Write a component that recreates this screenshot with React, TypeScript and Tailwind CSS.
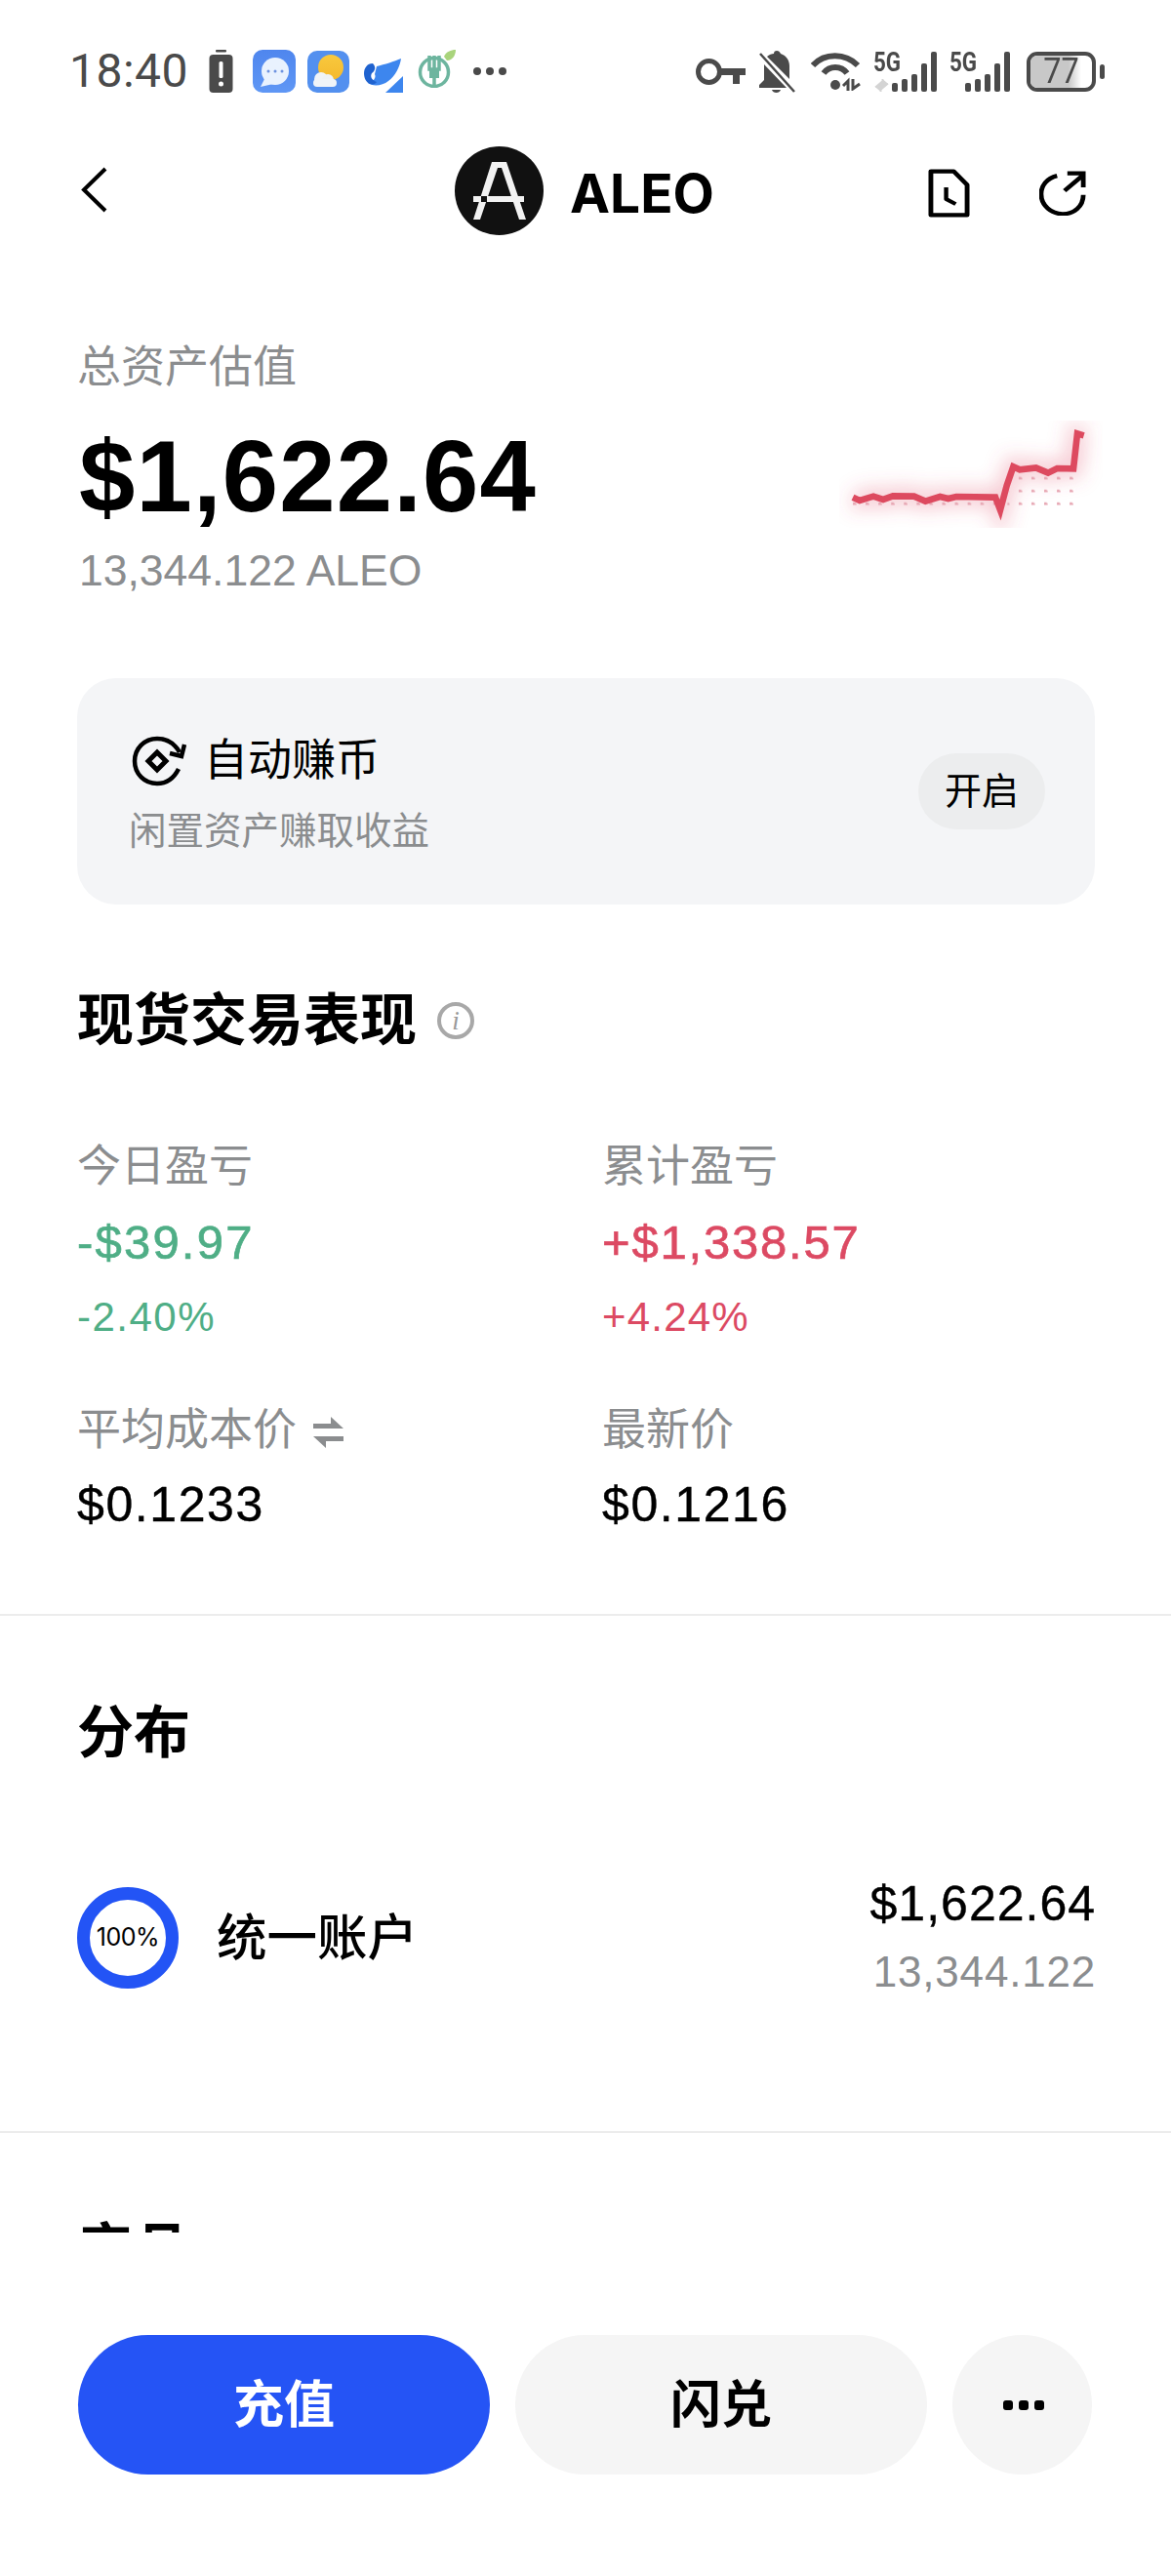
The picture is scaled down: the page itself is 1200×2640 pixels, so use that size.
const FONT = "font-['Liberation_Sans','Noto_Sans_CJK_SC',sans-serif]"

function AppIcons() {
  return (
    <div className="flex items-center h-[44px]">
      {/* 电量警告 */}
      <svg width="25" height="44" viewBox="0 0 25 44" className="ml-[24px]">
        <rect x="7" y="0" width="11" height="2.5" rx="1" fill="#4a4a4a" />
        <rect x="0.5" y="5" width="24" height="39" rx="4" fill="#4a4a4a" />
        <rect x="10.5" y="12" width="4" height="17" rx="1.5" fill="#fff" />
        <circle cx="12.5" cy="35" r="2.5" fill="#fff" />
      </svg>
      {/* 消息 */}
      <svg width="44" height="44" viewBox="0 0 44 44" className="ml-[20px]">
        <defs>
          <linearGradient id="msgBg" x1="0" y1="0" x2="0" y2="1">
            <stop offset="0" stopColor="#4f86ee" />
            <stop offset="1" stopColor="#5f97f5" />
          </linearGradient>
          <linearGradient id="sunBg" x1="0" y1="0" x2="0" y2="1">
            <stop offset="0" stopColor="#f8c93e" />
            <stop offset="1" stopColor="#f5b92e" />
          </linearGradient>
        </defs>
        <rect width="44" height="44" rx="10" fill="url(#msgBg)" />
        <circle cx="23" cy="22" r="14" fill="#e9f2fe" />
        <path d="M12 30 L8 38 L21 35 Z" fill="#e9f2fe" />
        <circle cx="16" cy="22" r="1.5" fill="#6d92e0" />
        <circle cx="23" cy="22" r="1.5" fill="#6d92e0" />
        <circle cx="30" cy="22" r="1.5" fill="#6d92e0" />
      </svg>
      {/* 天气 */}
      <svg width="43" height="43" viewBox="0 0 43 43" className="ml-[12px]">
        <rect width="43" height="43" rx="10" fill="#5390ef" />
        <circle cx="24" cy="17" r="13" fill="url(#sunBg)" />
        <circle cx="14" cy="29" r="7" fill="#f0f4f8" />
        <circle cx="21" cy="30" r="6" fill="#eef2f6" />
        <rect x="6" y="29" width="24" height="8" rx="4" fill="#f0f4f8" />
      </svg>
      {/* 蓝色应用 */}
      <svg width="41" height="35" viewBox="0 0 41 35" className="ml-[14px] self-end">
        <path d="M14 8 C22 6 32 3 39 0 C38 8 33 18 26 23 C20 28 10 29 5 25 C10 24 14 20 12 16 Z" fill="#3d86ee" />
        <path d="M10 5 C4 5 1 10 1 15 C1 20 3 24 7 26 C10 27 13 26 14 24 C9 22 7 19 9 15 C12 13 14 9 10 5 Z" fill="#1f62cf" />
        <path d="M23 35 L41 18 V35 Z" fill="#3d86ee" />
      </svg>
      {/* 绿色应用 */}
      <svg width="40" height="39" viewBox="0 0 40 39" className="ml-[15px] self-start">
        <circle cx="17" cy="23" r="14.5" fill="none" stroke="#6db59f" strokeWidth="3.5" />
        <path d="M12 6 V20 H22 V6 M17 6 V38" fill="none" stroke="#6db59f" strokeWidth="3.5" />
        <rect x="12" y="21" width="10" height="8" fill="#6db59f" />
        <path d="M27 7 C29 2 34 0 39 0 C39 5 36 11 30 11 Z" fill="#a9d47c" />
      </svg>
      {/* 更多 */}
      <div className="ml-[17px] flex gap-[5px]">
        <div className="w-[8px] h-[8px] rounded-full bg-[#4a4a4a]" />
        <div className="w-[8px] h-[8px] rounded-full bg-[#4a4a4a]" />
        <div className="w-[8px] h-[8px] rounded-full bg-[#4a4a4a]" />
      </div>
    </div>
  )
}

function Signal({ arrows, width }: { arrows: boolean; width: string }) {
  return (
    <div className={`relative h-[41px] ${width}`}>
      <span className="absolute left-0 top-[-3px] font-['Roboto',sans-serif] text-[28px] leading-[28px] font-bold text-[#4a4a4a] scale-x-[0.8] origin-left">
        5G
      </span>
      {arrows && (
        <svg width="17" height="13" viewBox="0 0 16 14" className="absolute left-0 bottom-0">
          <path d="M7 14 V4 L1 9 M9 0 V10 L15 5" fill="#d4d4d4" stroke="#d4d4d4" strokeWidth="2" />
        </svg>
      )}
      <div className="absolute right-0 bottom-0 flex items-end gap-[4px]">
        <div className="w-[6px] h-[9px] rounded-[2px] bg-[#4a4a4a]" />
        <div className="w-[6px] h-[13px] rounded-[2px] bg-[#4a4a4a]" />
        <div className="w-[6px] h-[18px] rounded-[2px] bg-[#4a4a4a]" />
        <div className="w-[6px] h-[29px] rounded-[2px] bg-[#4a4a4a]" />
        <div className="w-[6px] h-[41px] rounded-[2px] bg-[#4a4a4a]" />
      </div>
    </div>
  )
}

function SystemIcons() {
  return (
    <div className="flex items-center h-[44px]">
      {/* 钥匙 */}
      <svg width="51" height="27" viewBox="0 0 51 27">
        <circle cx="13.5" cy="13.5" r="11" fill="none" stroke="#4a4a4a" strokeWidth="5" />
        <path d="M25 10 H51 V17 H45 V26 H38 V17 H25 Z" fill="#4a4a4a" />
      </svg>
      {/* 静音 */}
      <svg width="38" height="43" viewBox="0 0 38 43" className="ml-[14px]">
        <path d="M18 0 C20 0 21 1 22 3 C28 5 31 10 31 16 V29 L8 6 C10 4 13 3 15 3 C15 1 16 0 18 0 Z" fill="#4a4a4a" />
        <path d="M5 14 L28 38 H0 V35 L5 30 Z" fill="#4a4a4a" />
        <path d="M1 3 L36 42" stroke="#4a4a4a" strokeWidth="2.5" />
        <path d="M13 40 H22 C21 44 14 44 13 40 Z" fill="#4a4a4a" />
      </svg>
      {/* WiFi */}
      <svg width="51" height="39" viewBox="0 0 51 39" className="ml-[15px]">
        <path d="M2 13 C14 0 35 0 48 13" fill="none" stroke="#4a4a4a" strokeWidth="6" />
        <path d="M13 21 C19 13 31 13 37 21" fill="none" stroke="#4a4a4a" strokeWidth="6" />
        <circle cx="25" cy="33" r="5" fill="#4a4a4a" />
        <path d="M38 39 V29 L33 34 M43 27 V37 L50 32" fill="none" stroke="#4a4a4a" strokeWidth="3" />
      </svg>
      <div className="ml-[13px]">
        <Signal arrows width="w-[65px]" />
      </div>
      <div className="ml-[13px]">
        <Signal arrows={false} width="w-[62px]" />
      </div>
      {/* 电量 */}
      <div className="ml-[17px] flex items-center gap-[4px]">
        <div className="relative w-[71px] h-[41px] rounded-[11px] border-[4px] border-[#4a4a4a] overflow-hidden bg-white">
          <div className="absolute inset-y-0 left-0 w-[52px] bg-gradient-to-r from-[#c8c8c8] from-75% to-white" />
          <span className="absolute inset-0 flex items-center justify-center font-['Roboto',sans-serif] text-[36px] leading-none text-[#4a4a4a] scale-x-[0.9]">
            77
          </span>
        </div>
        <div className="w-[5px] h-[15px] rounded-[3px] bg-[#4a4a4a]" />
      </div>
    </div>
  )
}

function AleoLogo() {
  return (
    <svg width="91" height="91" viewBox="0 0 91 91">
      <circle cx="45.5" cy="45.5" r="45.5" fill="#111" />
      <path d="M19 75 L38 16 H53 L73 75 H66 L48 22 H44 L26 75 Z" fill="#f2f2f2" />
      <rect x="19" y="51" width="52" height="6" fill="#f2f2f2" />
      <rect x="27" y="51" width="6" height="6" fill="#111" />
    </svg>
  )
}

function Sparkline() {
  const line =
    'M222 326 L243 336 L285 323 L315 333 L345 322 L410 323 L445 338 L490 324 L515 330 L540 324 L660 326 L675 365 L695 290 L715 232 L735 241 L785 235 L822 251 L850 237 L900 238 L912 130 L932 136'
  return (
    <svg width="270" height="110" viewBox="180 90 810 330" className="mr-[-8px] mt-[10px]">
      <defs>
        <pattern id="chartDots" x="222" y="232" width="39.2" height="39.2" patternUnits="userSpaceOnUse">
          <circle cx="4" cy="38" r="7" fill="#e7a8b4" />
        </pattern>
        <filter id="chartGlow" x="-20%" y="-60%" width="140%" height="220%">
          <feGaussianBlur stdDeviation="28" />
        </filter>
      </defs>
      <path d={line} fill="none" stroke="#e2516a" strokeOpacity="0.3" strokeWidth="56" filter="url(#chartGlow)" />
      <path d="M222 336 H660 L695 360 L715 240 H925 V360 H222 Z" fill="url(#chartDots)" />
      <path d={line} fill="none" stroke="#dd4a5f" strokeWidth="20" strokeLinejoin="miter" />
    </svg>
  )
}

function Stat({ label, value, valueClass, children }: { label: React.ReactNode; value: string; valueClass: string; children?: React.ReactNode }) {
  return (
    <div>
      <div className="flex items-center text-[45px] leading-[60px] text-[#8b8d8f]">{label}</div>
      <div className={`leading-[70px] ${valueClass}`}>{value}</div>
      {children}
    </div>
  )
}

export default function App() {
  return (
    <div className={`w-[1200px] h-[2640px] bg-white flex flex-col ${FONT}`}>
      {/* 状态栏 */}
      <div className="h-[140px] shrink-0 pl-[71px] pr-[68px] pt-[51px]">
        <div className="flex items-center justify-between">
          <div className="flex items-center">
            <span className="font-['Roboto',sans-serif] text-[48px] leading-[44px] text-[#4a4a4a] w-[119px] tracking-[0.5px]">18:40</span>
            <AppIcons />
          </div>
          <SystemIcons />
        </div>
      </div>

      {/* 顶部导航 */}
      <div className="h-[110px] shrink-0 flex items-center pl-[83px] pr-[87px]">
        <div className="w-[383px]">
          <svg width="27" height="47" viewBox="0 0 27 47" fill="none" stroke="#000" strokeWidth="4" className="mt-[-2px]">
            <path d="M25 2 L3 23.5 L25 45" />
          </svg>
        </div>
        <div className="flex items-center gap-[27px]">
          <AleoLogo />
          <span className="font-['Inter',sans-serif] text-[55px] leading-[70px] font-bold text-black mt-[6px]">ALEO</span>
        </div>
        <div className="flex-1 flex items-center justify-end gap-[71px] mt-[6px]">
          <svg width="43" height="50" viewBox="0 0 44 58" fill="none" stroke="#000" strokeWidth="5" strokeLinejoin="round" preserveAspectRatio="none">
            <path d="M3 3 H27 L41 19 V55 H3 Z" />
            <path d="M19 22 V36 L29 42" strokeWidth="4.5" />
          </svg>
          <svg width="48" height="46" viewBox="0 0 50 54" fill="none" stroke="#000" strokeWidth="5" preserveAspectRatio="none">
            <path d="M19 6 C8 9 2 18 2 28 C2 42 13 52 25 52 C37 52 47 43 47 29" />
            <path d="M27 24 L46 6 M30 3 H47 V20" />
          </svg>
        </div>
      </div>

      {/* 内容 */}
      <div className="h-[2038px] shrink-0 overflow-hidden">
        <div className="pl-[79px] pr-[78px] pt-[97px] flex items-center justify-between">
          <div>
            <div className="text-[45px] leading-[60px] text-[#8b8d8f]">总资产估值</div>
            <div className="mt-[27px] text-[103px] leading-[110px] font-bold text-black tracking-[1.2px] ml-[2px]">$1,622.64</div>
            <div className="mt-[11px] text-[44.5px] leading-[60px] text-[#8b8d8f] ml-[2px]">13,344.122 ALEO</div>
          </div>
          <Sparkline />
        </div>

        <div className="ml-[79px] mr-[78px] mt-[80px] h-[232px] rounded-[40px] bg-[#f4f5f7] pl-[53px] pr-[51px] flex items-center justify-between">
          <div className="pt-[5px]">
            <div className="flex items-center">
              <svg width="56" height="52" viewBox="0 0 56 52" fill="none" stroke="#000" strokeWidth="4.5" className="ml-[3px]">
                <path d="M48 34 C43 44 35 49 26 49 C13 49 3 39 3 26 C3 13 13 3 26 3 C36 3 44 8 49 17" />
                <path d="M54 9 L51 21 L39 18" strokeLinejoin="miter" />
                <path d="M26 17 L35 26 L26 35 L17 26 Z" strokeWidth="5" />
              </svg>
              <span className="ml-[18px] text-[45px] leading-[60px] text-black">自动赚币</span>
            </div>
            <div className="mt-[17px] text-[38.5px] leading-[50px] text-[#8b8d8f]">闲置资产赚取收益</div>
          </div>
          <div className="w-[130px] h-[78px] rounded-full bg-[#ecedee] flex items-center justify-center text-[38px] text-black">开启</div>
        </div>

        <div className="pl-[79px] pr-[78px]">
          <div className="mt-[84px] flex items-center">
            <span className="text-[58px] leading-[70px] font-bold text-black">现货交易表现</span>
            <svg width="38" height="38" viewBox="0 0 38 38" className="ml-[21px]">
              <circle cx="19" cy="19" r="17" fill="none" stroke="#a8a8a8" strokeWidth="4" />
              <text x="19" y="28" textAnchor="middle" fontFamily="Liberation Serif" fontStyle="italic" fontSize="27" fill="#999">i</text>
            </svg>
          </div>

          <div className="mt-[85px] grid grid-cols-[538px_1fr]">
            <Stat label="今日盈亏" value="-$39.97" valueClass="mt-[12px] text-[49px] tracking-[2.2px] [-webkit-text-stroke:0.7px] text-[#4fae86]">
              <div className="mt-[17px] text-[42px] leading-[50px] tracking-[1.5px] text-[#4fae86]">-2.40%</div>
            </Stat>
            <Stat label="累计盈亏" value="+$1,338.57" valueClass="mt-[12px] text-[49px] tracking-[1.8px] [-webkit-text-stroke:0.7px] text-[#dc4a63]">
              <div className="mt-[17px] text-[42px] leading-[50px] tracking-[1.2px] text-[#dc4a63]">+4.24%</div>
            </Stat>
          </div>
          <div className="mt-[61px] grid grid-cols-[538px_1fr]">
            <Stat
              label={
                <>
                  平均成本价
                  <svg width="31" height="32" viewBox="0 0 31 32" fill="#8b8d8f" className="ml-[17px] mt-[4px]">
                    <path d="M31 12 H0 V7 H18 V0 Z" />
                    <path d="M0 20 H31 V25 H13 V32 Z" />
                  </svg>
                </>
              }
              value="$0.1233"
              valueClass="mt-[11px] text-[50px] tracking-[1.6px] [-webkit-text-stroke:0.4px] text-black"
            />
            <Stat label="最新价" value="$0.1216" valueClass="mt-[11px] text-[50px] tracking-[1.6px] [-webkit-text-stroke:0.4px] text-black" />
          </div>
        </div>

        <div className="mt-[77px] h-[2px] bg-[#ececec]" />

        <div className="pl-[79px] pr-[78px]">
          <div className="mt-[85px] text-[58px] leading-[70px] font-bold text-black">分布</div>
          <div className="mt-[105px] h-[140px] flex items-center justify-between">
            <div className="flex items-center">
              <div className="w-[104px] h-[104px] rounded-full border-[13px] border-[#2354f5] flex items-center justify-center font-['Inter',sans-serif] text-[25px] text-black tracking-[-0.5px]">
                100%
              </div>
              <span className="ml-[39px] text-[51.5px] leading-[70px] font-medium text-black">统一账户</span>
            </div>
            <div className="text-right mr-[-1px]">
              <div className="text-[50px] leading-[60px] tracking-[1px] [-webkit-text-stroke:0.4px] text-black">$1,622.64</div>
              <div className="mt-[10px] text-[44px] leading-[60px] tracking-[0.8px] text-[#8b8d8f]">13,344.122</div>
            </div>
          </div>
        </div>

        <div className="mt-[128px] h-[2px] bg-[#ececec]" />

        <div className="pl-[79px] mt-[85px] text-[58px] leading-[70px] font-bold text-black">产品</div>
      </div>

      {/* 底部按钮 */}
      <div className="pl-[80px] pr-[81px] pt-[105px] flex gap-[26px]">
        <button className="w-[422px] h-[143px] rounded-full bg-[#2554f5] text-white text-[52px] font-bold">充值</button>
        <button className="w-[422px] h-[143px] rounded-full bg-[#f5f5f5] text-black text-[52px] font-bold">闪兑</button>
        <button className="w-[143px] h-[143px] rounded-full bg-[#f5f5f5] flex items-center justify-center gap-[6px] pl-[3px]">
          <span className="w-[10px] h-[10px] rounded-[3px] bg-black" />
          <span className="w-[10px] h-[10px] rounded-[3px] bg-black" />
          <span className="w-[10px] h-[10px] rounded-[3px] bg-black" />
        </button>
      </div>
    </div>
  )
}
